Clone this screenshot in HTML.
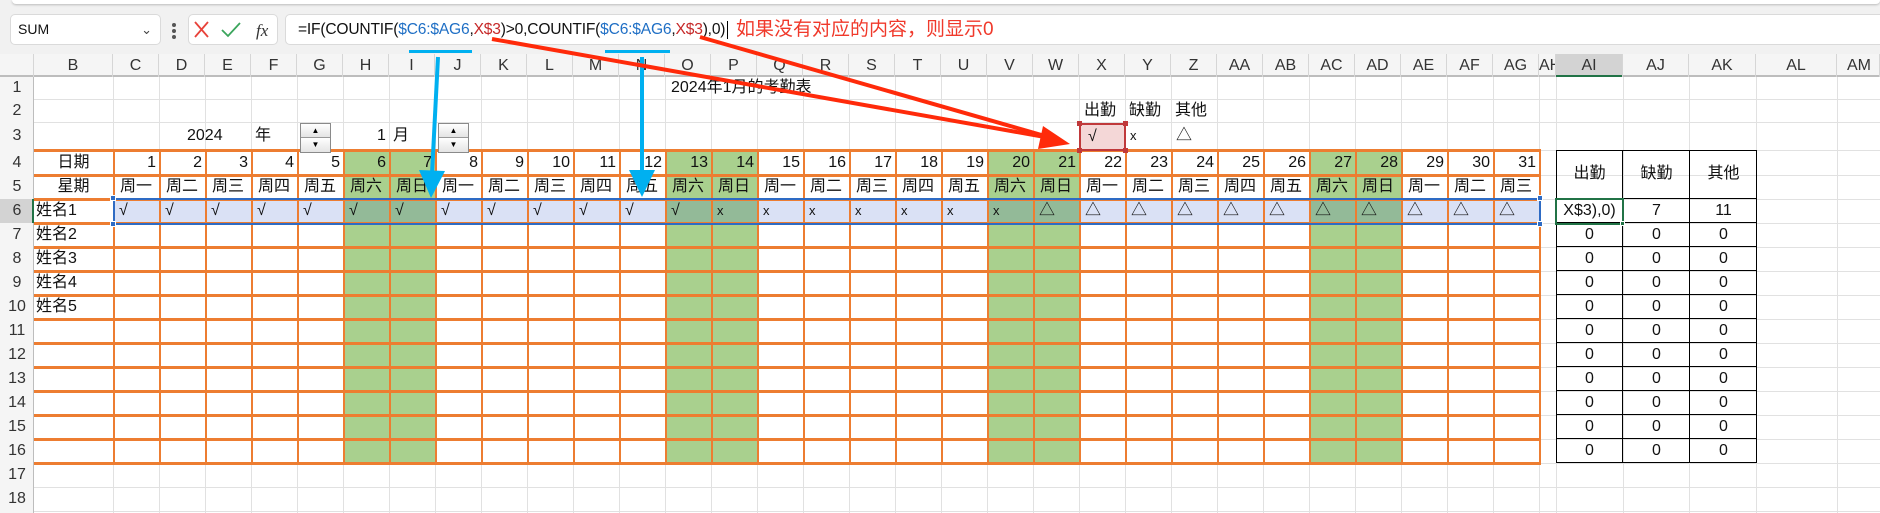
<!DOCTYPE html>
<html><head><meta charset="utf-8"><style>
*{margin:0;padding:0;box-sizing:border-box}
body{width:1880px;height:513px;overflow:hidden;background:#fff;position:relative;font-family:"Liberation Sans","Noto Sans CJK SC",sans-serif;color:#111}
.a{position:absolute}
.hl{position:absolute;height:1px;background:#E1E1E1}
.vl{position:absolute;width:1px;background:#E1E1E1}
.oh{position:absolute;left:34px;width:1507px;height:3px;background:#ED7D31}
.row{position:absolute;display:flex;font-size:16px;line-height:24px;height:24px;white-space:nowrap}
.row span{flex:none;width:46px;overflow:hidden}
.num span{text-align:right;padding-right:3px}
.wk span{text-align:center}
.mk span{padding-left:6px}
.ch{position:absolute;top:54px;left:0;height:23px;display:flex;font-size:16px;line-height:23px;color:#333;white-space:nowrap}
.ch span{flex:none;text-align:center;overflow:hidden;border-right:1px solid #D6D6D6}
.rn{position:absolute;left:0;width:34px;text-align:center;font-size:16px;color:#333}
.bt{position:absolute;height:1px;background:#000}
.bv{position:absolute;width:1px;background:#000}
.rt{position:absolute;display:flex;font-size:16px;line-height:24px}
.rt span{text-align:center;flex:none}
.spin{position:absolute;width:31px;height:30px;border:1px solid #8a8a8a;background:#f0f0f0}
.spin div{height:14px;font-size:8px;line-height:14px;text-align:center;color:#000;border-bottom:1px solid #999;background:linear-gradient(#fff,#e4e4e4)}
</style></head><body>

<div class="a" style="left:0;top:0;width:1880px;height:54px;background:#F1F1F1"></div>
<div class="a" style="left:12px;top:0;width:1868px;height:4px;background:#fff;box-shadow:0 1px 2px #bbb;border-radius:0 0 4px 4px"></div>
<div class="a" style="left:10px;top:14px;width:151px;height:31px;background:#fff;border:1px solid #DADADA;border-radius:5px;font-size:14px;line-height:29px;padding-left:7px">SUM<span style="position:absolute;right:8px;top:0;font-size:13px;color:#444">&#8964;</span></div>
<div class="a" style="left:172px;top:23px;width:4px;height:4px;background:#555;border-radius:2px"></div>
<div class="a" style="left:172px;top:29px;width:4px;height:4px;background:#555;border-radius:2px"></div>
<div class="a" style="left:172px;top:35px;width:4px;height:4px;background:#555;border-radius:2px"></div>
<div class="a" style="left:188px;top:14px;width:90px;height:31px;background:#fff;border:1px solid #DADADA;border-radius:5px"></div>
<svg class="a" style="left:188px;top:14px" width="90" height="31"><path d="M7 8 L20 23 M20 8 L7 23" stroke="#E8423A" stroke-width="1.8" fill="none"/><path d="M34 16 L40 22 L52 9" stroke="#3BA55C" stroke-width="1.8" fill="none"/><text x="68" y="22" font-family="Liberation Serif,serif" font-style="italic" font-size="17" fill="#333">fx</text></svg>
<div class="a" style="left:285px;top:14px;width:1600px;height:31px;background:#fff;border:1px solid #DADADA;border-radius:5px"></div>
<div class="a" style="left:298px;top:15px;font-size:15.6px;letter-spacing:-0.2px;line-height:30px;white-space:nowrap;color:#111">=IF(COUNTIF(<span style="color:#1F6FC5">$C6:$AG6</span>,<span style="color:#C62828">X$3</span>)&gt;0,COUNTIF(<span style="color:#1F6FC5">$C6:$AG6</span>,<span style="color:#C62828">X$3</span>),0)<span style="display:inline-block;width:1px;height:18px;background:#000;vertical-align:middle;margin-left:2px"></span></div>
<div class="a" style="left:736px;top:15px;font-size:19px;line-height:30px;color:#F0392B;white-space:nowrap">如果没有对应的内容，则显示0</div>

<div class="a" style="left:0;top:54px;width:1880px;height:23px;background:#F5F5F5;border-bottom:2px solid #BDBDBD"></div>
<div class="a" style="left:1556px;top:54px;width:67px;height:23px;background:#D3D3D3;border-bottom:2px solid #217346"></div>
<div class="ch">
<span style="width:34px"></span><span style="width:79px">B</span><span style="width:46px">C</span><span style="width:46px">D</span><span style="width:46px">E</span><span style="width:46px">F</span><span style="width:46px">G</span><span style="width:46px">H</span><span style="width:46px">I</span><span style="width:46px">J</span><span style="width:46px">K</span><span style="width:46px">L</span><span style="width:46px">M</span><span style="width:46px">N</span><span style="width:46px">O</span><span style="width:46px">P</span><span style="width:46px">Q</span><span style="width:46px">R</span><span style="width:46px">S</span><span style="width:46px">T</span><span style="width:46px">U</span><span style="width:46px">V</span><span style="width:46px">W</span><span style="width:46px">X</span><span style="width:46px">Y</span><span style="width:46px">Z</span><span style="width:46px">AA</span><span style="width:46px">AB</span><span style="width:46px">AC</span><span style="width:46px">AD</span><span style="width:46px">AE</span><span style="width:46px">AF</span><span style="width:46px">AG</span><span style="width:17px;text-align:left">AH</span><span style="width:67px">AI</span><span style="width:66px">AJ</span><span style="width:67px">AK</span><span style="width:81px">AL</span><span style="width:43px;text-align:left;padding-left:10px">AM</span>
</div>

<div class="a" style="left:0;top:77px;width:34px;height:436px;background:#F5F5F5;border-right:1px solid #BDBDBD"></div>
<div class="a" style="left:0;top:199px;width:34px;height:24px;background:#D3D3D3;border-right:2px solid #217346"></div>
<div class="rn" style="top:77px;line-height:22px">1</div>
<div class="rn" style="top:99px;line-height:23px">2</div>
<div class="rn" style="top:122px;line-height:28px">3</div>
<div class="rn" style="top:150px;line-height:25px">4</div>
<div class="rn" style="top:175px;line-height:24px">5</div>
<div class="rn" style="top:199px;line-height:24px">6</div>
<div class="rn" style="top:223px;line-height:24px">7</div>
<div class="rn" style="top:247px;line-height:24px">8</div>
<div class="rn" style="top:271px;line-height:24px">9</div>
<div class="rn" style="top:295px;line-height:24px">10</div>
<div class="rn" style="top:319px;line-height:24px">11</div>
<div class="rn" style="top:343px;line-height:24px">12</div>
<div class="rn" style="top:367px;line-height:24px">13</div>
<div class="rn" style="top:391px;line-height:24px">14</div>
<div class="rn" style="top:415px;line-height:24px">15</div>
<div class="rn" style="top:439px;line-height:24px">16</div>
<div class="rn" style="top:463px;line-height:24px">17</div>
<div class="rn" style="top:487px;line-height:24px">18</div>

<div class="a" style="left:113px;top:77px;width:1427px;height:436px;background:repeating-linear-gradient(to right,#E1E1E1 0 1px,transparent 1px 46px)"></div>
<div class="a" style="left:34px;top:199px;width:1846px;height:313px;background:repeating-linear-gradient(to bottom,#E1E1E1 0 1px,transparent 1px 24px)"></div>
<div class="hl" style="left:34px;width:1846px;top:99px"></div>
<div class="hl" style="left:34px;width:1846px;top:122px"></div>
<div class="hl" style="left:34px;width:1846px;top:150px"></div>
<div class="hl" style="left:34px;width:1846px;top:175px"></div>
<div class="vl" style="left:1539px;top:77px;height:436px"></div>
<div class="vl" style="left:1556px;top:77px;height:436px"></div>
<div class="vl" style="left:1623px;top:77px;height:436px"></div>
<div class="vl" style="left:1689px;top:77px;height:436px"></div>
<div class="vl" style="left:1756px;top:77px;height:436px"></div>
<div class="vl" style="left:1837px;top:77px;height:436px"></div>

<div class="a" style="left:343px;top:150px;width:92px;height:313px;background:#A9D08E"></div>
<div class="a" style="left:665px;top:150px;width:92px;height:313px;background:#A9D08E"></div>
<div class="a" style="left:987px;top:150px;width:92px;height:313px;background:#A9D08E"></div>
<div class="a" style="left:1309px;top:150px;width:92px;height:313px;background:#A9D08E"></div>

<div class="a" style="left:113px;top:199px;width:1427px;height:24px;background:rgba(50,90,200,0.18)"></div>

<div class="a" style="left:113px;top:150px;width:1428px;height:314px;background:repeating-linear-gradient(to right,#ED7D31 0 2px,transparent 2px 46px)"></div>
<div class="a" style="left:1539px;top:150px;width:2px;height:314px;background:#ED7D31"></div>
<div class="oh" style="top:149px"></div><div class="oh" style="top:174px"></div><div class="oh" style="top:198px"></div><div class="oh" style="top:222px"></div><div class="oh" style="top:246px"></div><div class="oh" style="top:270px"></div><div class="oh" style="top:294px"></div><div class="oh" style="top:318px"></div><div class="oh" style="top:342px"></div><div class="oh" style="top:366px"></div><div class="oh" style="top:390px"></div><div class="oh" style="top:414px"></div><div class="oh" style="top:438px"></div><div class="oh" style="top:462px"></div>

<div class="a" style="left:113px;top:198px;width:1428px;height:27px;border:2px solid #2E6BC4"></div>
<div class="a" style="left:110px;top:195px;width:6px;height:6px;background:#2E6BC4;border:1px solid #fff"></div>
<div class="a" style="left:110px;top:221px;width:6px;height:6px;background:#2E6BC4;border:1px solid #fff"></div>
<div class="a" style="left:1537px;top:195px;width:6px;height:6px;background:#2E6BC4;border:1px solid #fff"></div>
<div class="a" style="left:1537px;top:221px;width:6px;height:6px;background:#2E6BC4;border:1px solid #fff"></div>

<div class="a" style="left:671px;top:77px;font-size:16px;line-height:22px;white-space:nowrap">2024年1月的考勤表</div>
<div class="a" style="left:187px;top:122px;font-size:16px;line-height:28px">2024</div>
<div class="a" style="left:255px;top:122px;font-size:16px;line-height:28px">年</div>
<div class="spin" style="left:300px;top:123px"><div>▲</div><div style="border:none">▼</div></div>
<div class="a" style="left:377px;top:122px;font-size:16px;line-height:28px">1</div>
<div class="a" style="left:393px;top:122px;font-size:16px;line-height:28px">月</div>
<div class="spin" style="left:438px;top:123px"><div>▲</div><div style="border:none">▼</div></div>
<div class="a" style="left:1080px;top:100px;width:46px;height:22px;font-size:16px;line-height:22px;padding-left:4px">出勤</div>
<div class="a" style="left:1126px;top:100px;font-size:16px;line-height:22px;padding-left:3px">缺勤</div>
<div class="a" style="left:1172px;top:100px;font-size:16px;line-height:22px;padding-left:3px">其他</div>
<div class="a" style="left:1079px;top:123px;width:47px;height:28px;background:#F4D7D7;border:2px solid #C0393B;font-size:16px;line-height:24px;padding-left:7px">√</div>
<div class="a" style="left:1077px;top:121px;width:5px;height:5px;background:#C0393B"></div>
<div class="a" style="left:1123px;top:121px;width:5px;height:5px;background:#C0393B"></div>
<div class="a" style="left:1077px;top:148px;width:5px;height:5px;background:#C0393B"></div>
<div class="a" style="left:1123px;top:148px;width:5px;height:5px;background:#C0393B"></div>
<div class="a" style="left:1130px;top:122px;font-size:13px;line-height:28px">x</div>
<div class="a" style="left:1176px;top:122px;font-size:16px;line-height:28px">△</div>

<div class="row wk" style="left:34px;top:151px"><span style="width:79px">日期</span></div>
<div class="row num" style="left:113px;top:151px"><span>1</span><span>2</span><span>3</span><span>4</span><span>5</span><span>6</span><span>7</span><span>8</span><span>9</span><span>10</span><span>11</span><span>12</span><span>13</span><span>14</span><span>15</span><span>16</span><span>17</span><span>18</span><span>19</span><span>20</span><span>21</span><span>22</span><span>23</span><span>24</span><span>25</span><span>26</span><span>27</span><span>28</span><span>29</span><span>30</span><span>31</span></div>
<div class="row wk" style="left:34px;top:175px"><span style="width:79px">星期</span></div>
<div class="row wk" style="left:113px;top:175px"><span>周一</span><span>周二</span><span>周三</span><span>周四</span><span>周五</span><span>周六</span><span>周日</span><span>周一</span><span>周二</span><span>周三</span><span>周四</span><span>周五</span><span>周六</span><span>周日</span><span>周一</span><span>周二</span><span>周三</span><span>周四</span><span>周五</span><span>周六</span><span>周日</span><span>周一</span><span>周二</span><span>周三</span><span>周四</span><span>周五</span><span>周六</span><span>周日</span><span>周一</span><span>周二</span><span>周三</span></div>
<div class="row" style="left:36px;top:199px"><span style="width:77px">姓名1</span></div>
<div class="row mk" style="left:113px;top:199px"><span>√</span><span>√</span><span>√</span><span>√</span><span>√</span><span>√</span><span>√</span><span>√</span><span>√</span><span>√</span><span>√</span><span>√</span><span>√</span><span style="font-size:13px">x</span><span style="font-size:13px">x</span><span style="font-size:13px">x</span><span style="font-size:13px">x</span><span style="font-size:13px">x</span><span style="font-size:13px">x</span><span style="font-size:13px">x</span><span>△</span><span>△</span><span>△</span><span>△</span><span>△</span><span>△</span><span>△</span><span>△</span><span>△</span><span>△</span><span>△</span></div>
<div class="row" style="left:36px;top:223px"><span style="width:77px">姓名2</span></div>
<div class="row" style="left:36px;top:247px"><span style="width:77px">姓名3</span></div>
<div class="row" style="left:36px;top:271px"><span style="width:77px">姓名4</span></div>
<div class="row" style="left:36px;top:295px"><span style="width:77px">姓名5</span></div>

<div class="bt" style="left:1556px;width:201px;top:150px"></div>
<div class="bt" style="left:1556px;width:201px;top:198px"></div>
<div class="bt" style="left:1556px;width:201px;top:222px"></div>
<div class="bt" style="left:1556px;width:201px;top:246px"></div>
<div class="bt" style="left:1556px;width:201px;top:270px"></div>
<div class="bt" style="left:1556px;width:201px;top:294px"></div>
<div class="bt" style="left:1556px;width:201px;top:318px"></div>
<div class="bt" style="left:1556px;width:201px;top:342px"></div>
<div class="bt" style="left:1556px;width:201px;top:366px"></div>
<div class="bt" style="left:1556px;width:201px;top:390px"></div>
<div class="bt" style="left:1556px;width:201px;top:414px"></div>
<div class="bt" style="left:1556px;width:201px;top:438px"></div>
<div class="bt" style="left:1556px;width:201px;top:462px"></div>
<div class="bv" style="left:1556px;top:150px;height:313px"></div>
<div class="bv" style="left:1622px;top:150px;height:313px"></div>
<div class="bv" style="left:1689px;top:150px;height:313px"></div>
<div class="bv" style="left:1756px;top:150px;height:313px"></div>
<div class="rt" style="left:1556px;top:162px"><span style="width:67px">出勤</span><span style="width:67px">缺勤</span><span style="width:67px">其他</span></div>
<div class="rt" style="left:1556px;top:199px"><span style="width:67px">X$3),0)</span><span style="width:67px">7</span><span style="width:67px">11</span></div>
<div class="a" style="left:1555px;top:198px;width:69px;height:27px;border:2px solid #217346"></div>
<div class="a" style="left:1620px;top:221px;width:5px;height:5px;background:#217346;border:1px solid #fff"></div>
<div class="rt" style="left:1556px;top:223px"><span style="width:67px">0</span><span style="width:67px">0</span><span style="width:67px">0</span></div>
<div class="rt" style="left:1556px;top:247px"><span style="width:67px">0</span><span style="width:67px">0</span><span style="width:67px">0</span></div>
<div class="rt" style="left:1556px;top:271px"><span style="width:67px">0</span><span style="width:67px">0</span><span style="width:67px">0</span></div>
<div class="rt" style="left:1556px;top:295px"><span style="width:67px">0</span><span style="width:67px">0</span><span style="width:67px">0</span></div>
<div class="rt" style="left:1556px;top:319px"><span style="width:67px">0</span><span style="width:67px">0</span><span style="width:67px">0</span></div>
<div class="rt" style="left:1556px;top:343px"><span style="width:67px">0</span><span style="width:67px">0</span><span style="width:67px">0</span></div>
<div class="rt" style="left:1556px;top:367px"><span style="width:67px">0</span><span style="width:67px">0</span><span style="width:67px">0</span></div>
<div class="rt" style="left:1556px;top:391px"><span style="width:67px">0</span><span style="width:67px">0</span><span style="width:67px">0</span></div>
<div class="rt" style="left:1556px;top:415px"><span style="width:67px">0</span><span style="width:67px">0</span><span style="width:67px">0</span></div>
<div class="rt" style="left:1556px;top:439px"><span style="width:67px">0</span><span style="width:67px">0</span><span style="width:67px">0</span></div>

<svg class="a" style="left:0;top:0" width="1880" height="513">
<rect x="409" y="50" width="63" height="3" fill="#00B0F0"/>
<rect x="605" y="50" width="65" height="3" fill="#00B0F0"/>
<line x1="438" y1="57" x2="432" y2="174" stroke="#00B0F0" stroke-width="4"/>
<polygon points="419,170 445,171 431,198" fill="#00B0F0"/>
<line x1="642" y1="57" x2="642" y2="174" stroke="#00B0F0" stroke-width="4"/>
<polygon points="629,170 655,170 642,197" fill="#00B0F0"/>
<line x1="492" y1="39" x2="1045" y2="137" stroke="#FF2A0A" stroke-width="4"/>
<line x1="700" y1="37" x2="1045" y2="136" stroke="#FF2A0A" stroke-width="4"/>
<polygon points="1070,144 1043,126 1038,149" fill="#FF2A0A"/>
</svg>
</body></html>
